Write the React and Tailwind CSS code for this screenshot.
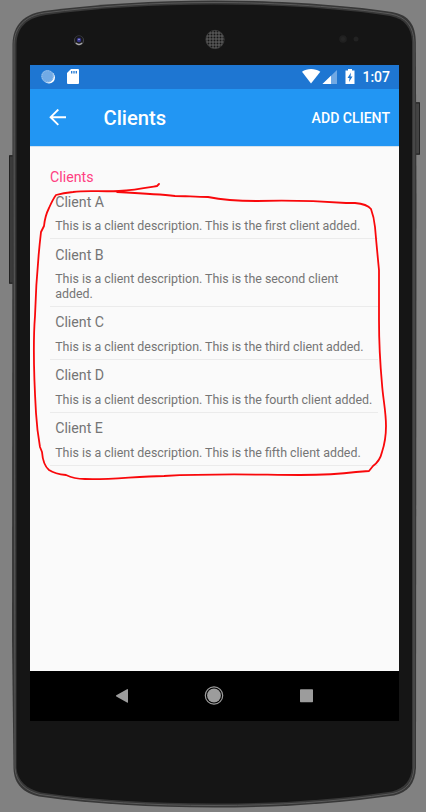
const clients = [
  { name: "Client A", lines: ["This is a client description. This is the first client added."] },
  { name: "Client B", lines: ["This is a client description. This is the second client", "added."] },
  { name: "Client C", lines: ["This is a client description. This is the third client added."] },
  { name: "Client D", lines: ["This is a client description. This is the fourth client added."] },
  { name: "Client E", lines: ["This is a client description. This is the fifth client added."] },
];

function PhoneBody() {
  return (
    <svg className="absolute inset-0" width="426" height="812" viewBox="0 0 426 812" fill="none">
      <defs>
        <pattern id="mesh" width="3" height="3" patternUnits="userSpaceOnUse">
          <rect width="3" height="3" fill="#555" />
          <circle cx="1.5" cy="1.5" r="1" fill="#161616" />
        </pattern>
      </defs>
      <rect x="9" y="155" width="6" height="129" rx="1" fill="#3b3b3b" />
      <path d="M9.5 156V283M9 156h5M9 283h5" stroke="#222" />
      <rect x="415" y="102" width="5" height="53" rx="1" fill="#444" />
      <path d="M419.5 103V154M416 103h4M416 154h4" stroke="#222" />
      <path
        d="M12.5 44C13 25 24 14 44 11C98 4 155 .5 214 .5C278 .5 345 5 392 12C409 15 415.500 25 415.800 42L416.500 200L416 768C415 784 408 792 394 795.500C335 804 278 807.500 214 807.500C151 807.500 94 804 39 796.500C24 793 14 785 13.500 768L12 640Z"
        fill="#373737"
      />
      <path
        d="M14 44C14.500 27 25 16 44 13C98 6 155 2.500 214 2.500C278 2.500 345 7 391 14C406 17 413.500 26 414 42V768C413 782 407 790 393 793.500C335 802 278 805.500 214 805.500C151 805.500 94 802 40 794.500C26 791 16 783 15 768Z"
        stroke="#595959"
      />
      <path
        d="M16.500 44C17 28 26 18 46 15C98 8 155 4.500 214 4.500C278 4.500 345 9 390 16C405 19 411.500 28 412 42V768C411 780 405 788 392 791.500C335 800 278 803.500 214 803.500C151 803.500 94 800 41 792.500C27 789 17.500 781 16.500 768Z"
        fill="#151515"
      />
      <circle cx="79" cy="40.500" r="5" fill="#47474b" />
      <circle cx="79" cy="40" r="4" fill="#18181c" />
      <circle cx="79" cy="40" r="2.200" fill="#35348a" />
      <circle cx="79" cy="39.500" r=".8" fill="#aaa8ee" />
      <path d="M76 43c2 2 4 2 6 0" stroke="#aaa" strokeWidth="1.300" />
      <circle cx="215" cy="39.500" r="9.200" fill="url(#mesh)" stroke="#444" strokeWidth=".6" />
      <circle cx="343" cy="39" r="3.800" fill="#202020" />
      <circle cx="343" cy="39" r="2" fill="#252525" />
      <circle cx="356" cy="39" r="2.500" fill="#222" />
    </svg>
  );
}

function StatusBar() {
  return (
    <div className="flex h-6 items-center bg-[#1e76d2] pl-[10px] pr-[9px] text-white">
      <svg width="40" height="18" viewBox="40 68 40 18" fill="none">
        <circle cx="49" cy="77.500" r="6" fill="#fff" />
        <circle cx="47.500" cy="76.200" r="6.300" fill="#72aae5" />
        <circle cx="47.500" cy="76.200" r="5.500" stroke="#a6c9ee" strokeWidth=".8" strokeDasharray="1 1" />
        <path d="M71 69H78Q79 69 79 70V83Q79 84 78 84H68Q67 84 67 83V73Z" fill="#fff" />
        <path d="M71.700 71v2.500M74 71v2.500M76.300 71v2.500" stroke="#1e76d2" strokeWidth="1.300" />
      </svg>
      <svg className="ml-auto" width="56" height="18" viewBox="301 68 56 18" fill="none">
        <path d="M302 71.800C307 68 315 68 320.300 71.800L311 83.500Z" fill="#fff" />
        <path d="M337 70V84H322.500Z" fill="#71a9e4" />
        <path d="M331 75.800V84H322.500Z" fill="#fff" />
        <path d="M348 69H352V70.500H354.500V84H345.500V70.500H348Z" fill="#fff" />
        <path d="M351 72.500L347.500 78H349.500L349 82L352.500 76.500H350.500Z" fill="#1e76d2" />
      </svg>
      <span className="ml-[5px] text-[14px] font-medium leading-6">1:07</span>
    </div>
  );
}

function AppBar() {
  return (
    <header className="flex h-[57px] items-center bg-[#2296f3] pl-[19px] pr-[9px] text-white">
      <svg width="18" height="18" viewBox="49 109 18 18" fill="none" stroke="#fff" strokeWidth="1.900">
        <path d="M66 117.200H50.500M58.300 109.500L50.600 117.200L58.300 124.900" />
      </svg>
      <h1 className="ml-[36.5px] text-[20.2px] font-medium leading-6">Clients</h1>
      <button className="ml-auto text-[14.1px] font-medium leading-6">ADD CLIENT</button>
    </header>
  );
}

function ClientRow({ client }) {
  return (
    <li className="border-b border-[#ebebeb] pb-[4.45px] pl-[5.2px] pt-[6.75px]">
      <h3 className="text-[14.2px] leading-[18px]">{client.name}</h3>
      <div className="mt-[8.35px] text-[12.42px] leading-[14.5px]">
        {client.lines.map((line) => (
          <p key={line} className="whitespace-nowrap">{line}</p>
        ))}
      </div>
    </li>
  );
}

function NavBar() {
  return (
    <nav className="flex h-[50px] items-center justify-center bg-black">
      <svg width="200" height="20" viewBox="115 686 200 20" fill="#9c9c9c">
        <path d="M127 689.300Q128 688.700 128 689.500V702.200Q128 703 127 702.500L116.300 696.400Q115.500 695.800 116.300 695.300Z" />
        <circle cx="214" cy="695.500" r="6.900" />
        <circle cx="214" cy="695.500" r="8.700" fill="none" stroke="#9c9c9c" strokeWidth="1.200" />
        <rect x="300" y="689.300" width="13" height="13" rx=".7" />
      </svg>
    </nav>
  );
}

export default function App() {
  return (
    <div className="relative h-[812px] w-[426px] overflow-hidden bg-[#818181] font-[Roboto,sans-serif]">
      <PhoneBody />
      <div className="relative ml-[30px] flex h-[721px] w-[369px] flex-col pt-[65px]">
        <StatusBar />
        <AppBar />
        <main className="flex-1 border-t border-[#d3e2ee] bg-[#fafafa] pl-5 pr-[21px] pt-[21px] text-[#757575]">
          <h2 className="text-[14.2px] leading-[18px] text-[#ff4081]">Clients</h2>
          <ul>
            {clients.map((client) => (
              <ClientRow key={client.name} client={client} />
            ))}
          </ul>
        </main>
        <NavBar />
      </div>
      <svg className="pointer-events-none absolute inset-0" width="426" height="812" viewBox="0 0 426 812" fill="none">
        <path
          d="M159 184L157 186C145 188 134 190 119 191C101 192 88 190 73 192Q63 193 56 195Q53 199 49 208Q45 216 44 226L41 232C38 258 36 282 35 316C33 342 34 379 36 413Q37 430 40 447L42 452Q43 465 49 470Q55 474 66 475Q74 479 85 479C112 480 137 476 164 476C222 473 261 475 300 475C325 475 341 474 356 472L369 471L373 466Q380 461 382 452Q386 440 386 426C386 411 383 399 382 384C380 362 379 344 379 320V270Q377 250 375 227Q374 217 371 209Q367 204 355 203H346C318 201 288 200 257 201C239 201 223 200 208 197C195 197 186 196 175 196C157 194 136 193 117 192"
          stroke="#f9080b"
          strokeWidth="1.800"
          strokeLinejoin="round"
          strokeLinecap="round"
        />
      </svg>
    </div>
  );
}
